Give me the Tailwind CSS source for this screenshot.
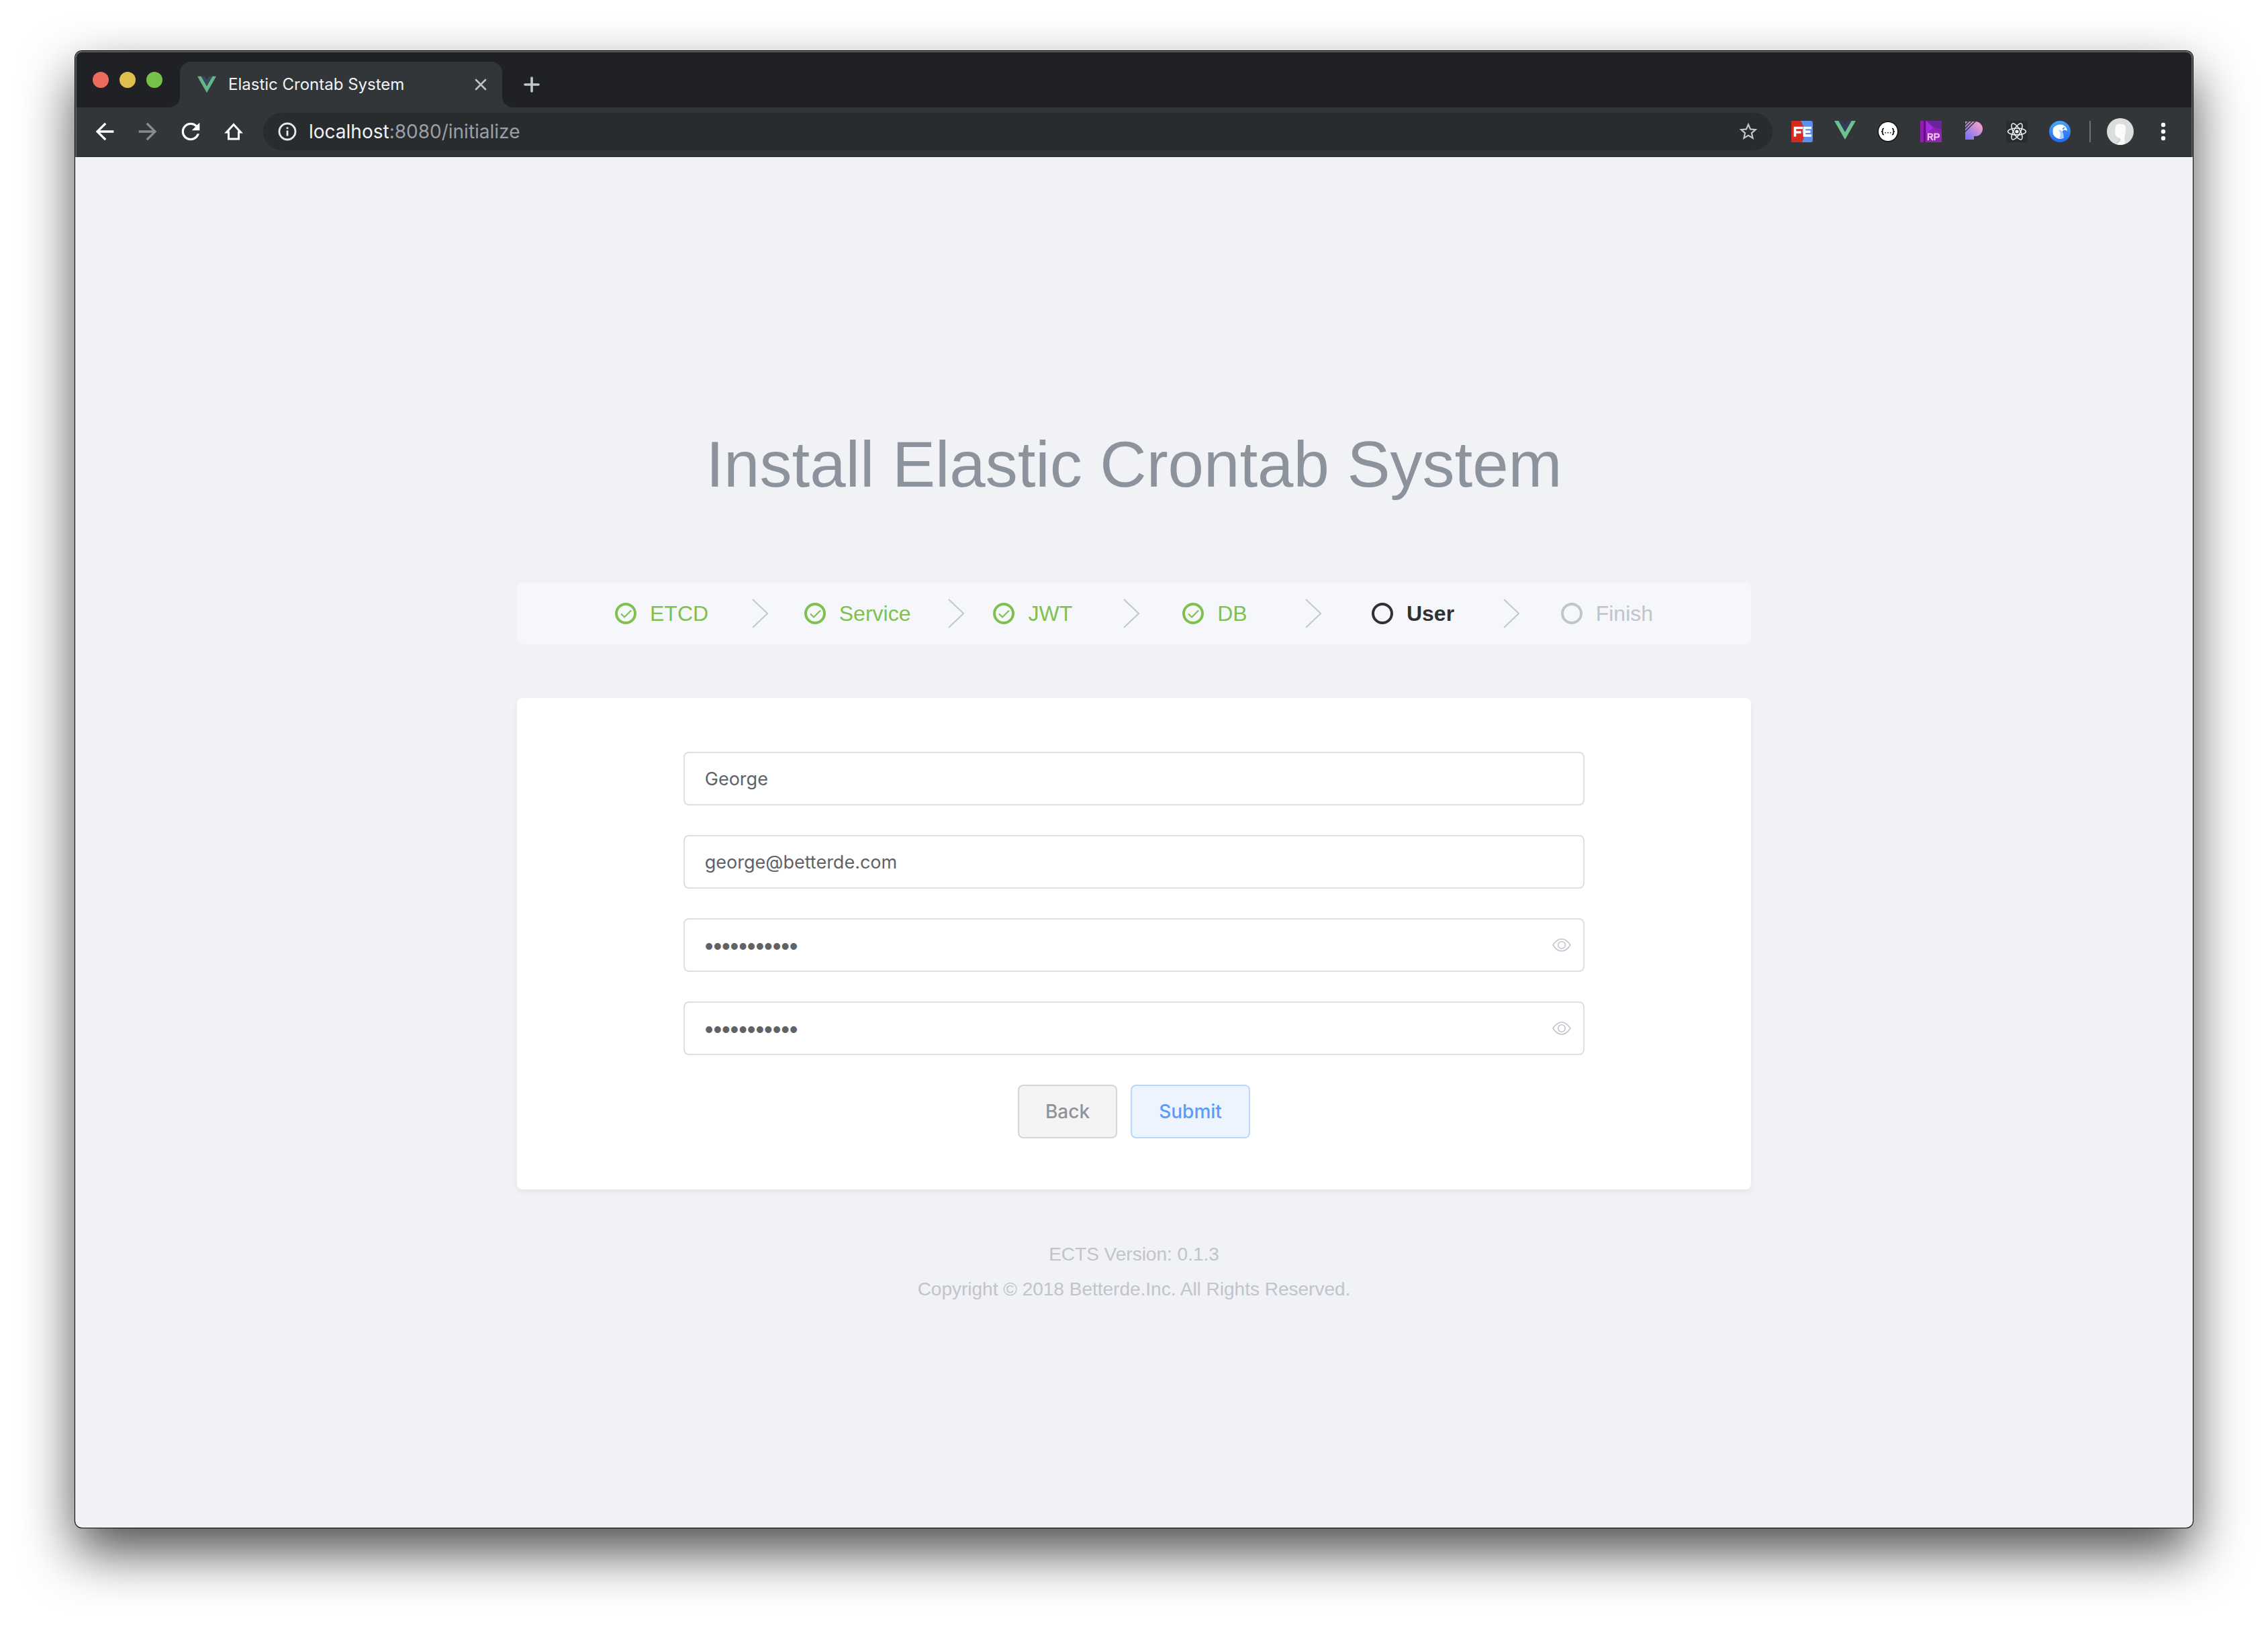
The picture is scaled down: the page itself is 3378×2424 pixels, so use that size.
<!DOCTYPE html>
<html lang="en">
<head>
<meta charset="utf-8">
<title>Elastic Crontab System</title>
<script src="https://cdn.jsdelivr.net/npm/@tailwindcss/browser@4"></script>
</head>
<body class="flex min-h-screen flex-col bg-white px-[112px] pt-[76px] pb-[148px] font-['Inter',sans-serif]">
<div class="flex flex-1 flex-col rounded-[10px] bg-[#f0f2f6] shadow-[0_0_0_1px_#000,0_36px_80px_rgba(0,0,0,0.7)]">

  <!-- Browser chrome -->
  <header class="rounded-t-[10px] border-x-2 border-t-2 border-[#5d6061] bg-[#202124]">
    <div class="flex h-[82px] items-center pl-6">
      <div class="flex gap-4">
        <button aria-label="Close window" class="size-6 rounded-full bg-[#ec6a5e]"></button>
        <button aria-label="Minimize window" class="size-6 rounded-full bg-[#e0c04c]"></button>
        <button aria-label="Zoom window" class="size-6 rounded-full bg-[#76c14a]"></button>
      </div>
      <div class="relative ml-[26px] flex h-[68px] w-[480px] items-center self-end rounded-t-2xl bg-[#323639] pr-4 pl-[26px]">
        <svg class="absolute bottom-0 -left-4 size-4" viewBox="0 0 16 16"><path d="M16 0A16 16 0 0 1 0 16H16Z" fill="#323639"/></svg>
        <svg class="absolute -right-4 bottom-0 size-4" viewBox="0 0 16 16"><path d="M0 0A16 16 0 0 0 16 16H0Z" fill="#323639"/></svg>
        <svg class="h-7 w-7" viewBox="0 0 32 28"><path d="M0 0H6.500L16 16.500L25.500 0H32L16 28Z" fill="#64b587"/><path d="M6.500 0H12.500L16 6L19.500 0H25.500L16 16.500Z" fill="#384960"/></svg>
        <span class="ml-[18px] flex-1 text-[24px] leading-8 text-[#f1f3f4]">Elastic Crontab System</span>
        <button aria-label="Close tab" class="flex size-8 items-center justify-center"><svg class="size-[18px]" viewBox="0 0 18 18"><path d="M2 2L16 16M16 2L2 16" stroke="#bdc1c6" stroke-width="2.600" stroke-linecap="round"/></svg></button>
      </div>
      <button aria-label="New tab" class="ml-6 flex h-[68px] w-10 items-center justify-center self-end"><svg class="size-6" viewBox="0 0 24 24"><path d="M12 2V22M2 12H22" stroke="#c3c7cb" stroke-width="3.600" stroke-linecap="round"/></svg></button>
    </div>

    <div class="flex h-[74px] items-center border-b border-[#2b2230] bg-[#323639] px-[10px] pb-px">
      <button aria-label="Back" class="flex w-16 justify-center"><svg class="size-10 fill-white" viewBox="0 0 24 24"><path d="M20 11H7.830l5.590-5.590L12 4l-8 8 8 8 1.410-1.410L7.830 13H20v-2z"/></svg></button>
      <button aria-label="Forward" class="flex w-16 justify-center"><svg class="size-10 fill-[#8a8c8e]" viewBox="0 0 24 24"><path d="M12 4l-1.410 1.410L16.170 11H4v2h12.170l-5.580 5.590L12 20l8-8z"/></svg></button>
      <button aria-label="Reload" class="flex w-16 justify-center"><svg class="size-10 fill-white" viewBox="0 0 24 24"><path d="M17.650 6.350C16.200 4.900 14.210 4 12 4c-4.420 0-7.990 3.580-7.990 8s3.570 8 7.990 8c3.730 0 6.840-2.550 7.730-6h-2.080c-.82 2.330-3.040 4-5.650 4-3.310 0-6-2.690-6-6s2.690-6 6-6c1.660 0 3.140.69 4.220 1.780L13 11h7V4l-2.350 2.350z"/></svg></button>
      <button aria-label="Home" class="flex w-16 justify-center"><svg class="size-[28px]" viewBox="0 0 28 28"><path d="M14 3.500L3.500 15H6.500V25H21.500V15H24.500Z" fill="none" stroke="#fff" stroke-width="3"/></svg></button>

      <div class="ml-3 flex h-14 min-w-0 flex-1 items-center rounded-full bg-[#282c2f] pr-5 pl-[22px]">
        <svg class="size-7" viewBox="0 0 28 28"><circle cx="14" cy="14" r="12" fill="none" stroke="#e8eaed" stroke-width="2.800"/><path d="M12.600 12.500H15.400V20.500H12.600ZM12.600 7.500H15.400V10.300H12.600Z" fill="#e8eaed"/></svg>
        <div role="textbox" aria-label="Address" contenteditable="true" class="ml-[18px] flex-1 text-[28px] leading-9 text-[#9aa0a6]"><span class="text-[#f1f3f4]">localhost</span>:8080/initialize</div>
        <button aria-label="Bookmark this page"><svg class="size-8" viewBox="0 0 24 24"><path d="M22 9.240l-7.190-.62L12 2 9.190 8.630 2 9.240l5.460 4.730L5.820 21 12 17.270 18.180 21l-1.630-7.030L22 9.240zM12 15.400l-3.760 2.270 1-4.280-3.320-2.880 4.380-.38L12 6.100l1.710 4.040 4.380.38-3.320 2.880 1 4.280L12 15.400z" fill="#c3c7cb"/></svg></button>
      </div>

      <div class="ml-3 flex">
        <button aria-label="FE helper" class="flex w-16 justify-center"><svg class="size-8" viewBox="0 0 32 32"><rect width="32" height="32" rx="3" fill="#5a8fee"/><path d="M3 0H14L18 8L16 16L19 24L16 32H3Q0 32 0 29V3Q0 0 3 0Z" fill="#d52b1e"/><path d="M5.500 23.500V10.500H17M5.500 17H14.500M30 10.500H19.500V22H30M19.500 16.300H28.500" fill="none" stroke="#fff" stroke-width="3.600"/></svg></button>
        <button aria-label="Vue devtools" class="flex w-16 justify-center"><svg class="h-7 w-8" viewBox="0 0 32 28"><path d="M0 0H6.500L16 16.500L25.500 0H32L16 28Z" fill="#6cc091"/><path d="M6.500 0H12.500L16 6L19.500 0H25.500L16 16.500Z" fill="#343a5c"/></svg></button>
        <button aria-label="JSON viewer" class="flex w-16 justify-center"><svg class="size-8" viewBox="0 0 32 32"><circle cx="16" cy="16" r="15.500" fill="#111"/><circle cx="16" cy="16" r="14" fill="#fff"/><path d="M10 11.500Q8 11.500 8 13V14.500Q8 16 6 16Q8 16 8 17.500V19Q8 20.500 10 20.500M22 11.500Q24 11.500 24 13V14.500Q24 16 26 16Q24 16 24 17.500V19Q24 20.500 22 20.500" fill="none" stroke="#111" stroke-width="1.600"/><path d="M11.500 17h1.600v1.600h-1.600zM15.200 17h1.600v1.600h-1.600zM18.900 17h1.600v1.600h-1.600z" fill="#111"/></svg></button>
        <button aria-label="Axure RP" class="flex w-16 justify-center"><svg class="size-8" viewBox="0 0 32 32"><rect width="32" height="32" fill="#8e20b0"/><path d="M9 0H32V12L20 10Z" fill="#6a2399"/><path d="M9 0L20 10L9 20Z" fill="#a32be0"/><path d="M9 20L20 10L32 20V32H9Z" fill="#9226b4"/><path d="M5 0H8V32H5Z" fill="#5c1580"/><path d="M12 29V19.500H15.500Q18 19.500 18 21.800Q18 24 15.500 24H12.500M15.500 24L18.500 29M21.500 29V19.500H25Q28 19.500 28 22Q28 24.500 25 24.500H21.500" fill="none" stroke="#f3c6f5" stroke-width="2.200"/></svg></button>
        <button aria-label="Pixel tool" class="flex w-16 justify-center"><svg class="size-7" viewBox="0 0 28 28"><defs><linearGradient id="pg" x1="1" y1="0" x2="0" y2="1"><stop offset="0.200" stop-color="#e79ccd"/><stop offset="1" stop-color="#6f6df8"/></linearGradient></defs><path d="M1 1H16A11 11 0 0 1 16 23H14V28H1Z" fill="url(#pg)"/><path d="M0 7L7 0M0 12L12 0M0 17L17 0" stroke="#323639" stroke-width="1.500"/></svg></button>
        <button aria-label="React devtools" class="flex w-16 justify-center"><svg class="size-8" viewBox="0 0 32 32"><rect width="32" height="32" rx="3" fill="#292c2f"/><g fill="none" stroke="#f1f3f4" stroke-width="1.500"><ellipse cx="16" cy="16" rx="13.500" ry="5"/><ellipse cx="16" cy="16" rx="13.500" ry="5" transform="rotate(60 16 16)"/><ellipse cx="16" cy="16" rx="13.500" ry="5" transform="rotate(120 16 16)"/></g><circle cx="16" cy="16" r="2.600" fill="#f1f3f4"/></svg></button>
        <button aria-label="Wave extension" class="flex w-16 justify-center"><svg class="size-8" viewBox="0 0 32 32"><defs><linearGradient id="wg" x1="0" y1="0" x2="0" y2="1"><stop offset="0" stop-color="#4aa6f5"/><stop offset="1" stop-color="#2468f6"/></linearGradient></defs><circle cx="16" cy="16" r="16" fill="url(#wg)"/><path d="M27 15Q26 6 17 5.500Q10 5.500 6 11Q4 20 9 24Q14 29 22 25.500Q16 22 20 15Q23 12 27 15Z" fill="#fff"/><path d="M14 13Q22 14 22 25.500Q19 27 15 26Q19 20 14 13Z" fill="#a9cdfb"/><path d="M20 11L24 9L21 14Z" fill="#3b86f6"/></svg></button>
      </div>
      <div class="mx-3 h-8 w-[2px] bg-[#6d7174]"></div>
      <button aria-label="Profile" class="flex w-16 justify-center"><svg class="size-10" viewBox="0 0 40 40"><circle cx="20" cy="20" r="20" fill="#dcdddd"/><path d="M13 12Q15 8 20 8.500Q27 8 28 14Q28.500 22 26 29L27 38Q21 41 15 39L19 35V30Q12 28 12 20Z" fill="#fafbfb"/><path d="M17 30Q21 31 19 34L14 37" fill="none" stroke="#c8caca" stroke-width="1.200"/></svg></button>
      <button aria-label="Menu" class="flex w-16 justify-center"><svg class="h-[28px] w-2" viewBox="0 0 8 28"><circle cx="4" cy="4" r="3.200" fill="#fff"/><circle cx="4" cy="14" r="3.200" fill="#fff"/><circle cx="4" cy="24" r="3.200" fill="#fff"/></svg></button>
    </div>
  </header>

  <!-- Installer page -->
  <main class="flex flex-1 flex-col items-center pt-[402px] font-['Liberation_Sans',sans-serif]">
    <h1 class="text-[96px] leading-[112px] text-[#8c939d]">Install Elastic Crontab System</h1>

    <div class="mt-[120px] w-full max-w-[1838px]">
      <ol class="flex h-[92px] items-center rounded-lg bg-[#f5f7fb] px-[146px] text-[32px] leading-10">
        <li class="flex flex-1 items-center text-[#7fc050]">
          <svg class="size-8" viewBox="0 0 32 32" fill="none" stroke="currentColor"><circle cx="16" cy="16" r="14" stroke-width="4"/><path d="M9 16.500L14 21.500L24 11.500" stroke-width="2.200"/></svg>
          <span class="ml-5">ETCD</span>
          <span class="flex flex-1 justify-center pl-3"><svg class="h-11 w-6" viewBox="0 0 24 44"><path d="M1 1L23 22L1 43" fill="none" stroke="#c3c6cd" stroke-width="2"/></svg></span>
        </li>
        <li class="flex flex-1 items-center text-[#7fc050]">
          <svg class="size-8" viewBox="0 0 32 32" fill="none" stroke="currentColor"><circle cx="16" cy="16" r="14" stroke-width="4"/><path d="M9 16.500L14 21.500L24 11.500" stroke-width="2.200"/></svg>
          <span class="ml-5">Service</span>
          <span class="flex flex-1 justify-center pl-3"><svg class="h-11 w-6" viewBox="0 0 24 44"><path d="M1 1L23 22L1 43" fill="none" stroke="#c3c6cd" stroke-width="2"/></svg></span>
        </li>
        <li class="flex flex-1 items-center text-[#7fc050]">
          <svg class="size-8" viewBox="0 0 32 32" fill="none" stroke="currentColor"><circle cx="16" cy="16" r="14" stroke-width="4"/><path d="M9 16.500L14 21.500L24 11.500" stroke-width="2.200"/></svg>
          <span class="ml-5">JWT</span>
          <span class="flex flex-1 justify-center pl-3"><svg class="h-11 w-6" viewBox="0 0 24 44"><path d="M1 1L23 22L1 43" fill="none" stroke="#c3c6cd" stroke-width="2"/></svg></span>
        </li>
        <li class="flex flex-1 items-center text-[#7fc050]">
          <svg class="size-8" viewBox="0 0 32 32" fill="none" stroke="currentColor"><circle cx="16" cy="16" r="14" stroke-width="4"/><path d="M9 16.500L14 21.500L24 11.500" stroke-width="2.200"/></svg>
          <span class="ml-5">DB</span>
          <span class="flex flex-1 justify-center pl-3"><svg class="h-11 w-6" viewBox="0 0 24 44"><path d="M1 1L23 22L1 43" fill="none" stroke="#c3c6cd" stroke-width="2"/></svg></span>
        </li>
        <li aria-current="step" class="flex flex-1 items-center font-bold text-[#303133]">
          <span class="size-8 rounded-full border-4 border-current"></span>
          <span class="ml-5">User</span>
          <span class="flex flex-1 justify-center pl-3"><svg class="h-11 w-6" viewBox="0 0 24 44"><path d="M1 1L23 22L1 43" fill="none" stroke="#c3c6cd" stroke-width="2"/></svg></span>
        </li>
        <li class="flex items-center text-[#c1c4cc]">
          <span class="size-8 rounded-full border-4 border-current"></span>
          <span class="ml-5">Finish</span>
        </li>
      </ol>

      <form class="mt-20 flex flex-col items-center rounded-lg bg-white px-20 pt-20 pb-[76px] font-['Inter',sans-serif] text-[27px] text-[#606266] shadow-[0_4px_8px_rgba(0,0,0,0.06)]">
        <div class="flex w-4/5 flex-col gap-11">
          <input aria-label="Name" type="text" value="George" class="h-20 w-full rounded-lg border-2 border-[#dcdfe6] bg-white px-[30px]">
          <input aria-label="Email" type="email" value="george@betterde.com" class="h-20 w-full rounded-lg border-2 border-[#dcdfe6] bg-white px-[30px]">
          <div class="relative">
            <input aria-label="Password" type="password" value="betterde123" class="h-20 w-full rounded-lg border-2 border-[#dcdfe6] bg-white px-[30px] pt-1 font-['Liberation_Sans',sans-serif] text-[36px]">
            <button type="button" aria-label="Show password" class="absolute inset-y-0 right-5 flex items-center"><svg class="h-5 w-7" viewBox="0 0 28 20" fill="none" stroke="#c0c4cc" stroke-width="1.600"><path d="M1 10Q7 1 14 1T27 10Q21 19 14 19T1 10Z"/><circle cx="14" cy="10" r="5.300"/></svg></button>
          </div>
          <div class="relative">
            <input aria-label="Confirm password" type="password" value="betterde123" class="h-20 w-full rounded-lg border-2 border-[#dcdfe6] bg-white px-[30px] pt-1 font-['Liberation_Sans',sans-serif] text-[36px]">
            <button type="button" aria-label="Show password confirmation" class="absolute inset-y-0 right-5 flex items-center"><svg class="h-5 w-7" viewBox="0 0 28 20" fill="none" stroke="#c0c4cc" stroke-width="1.600"><path d="M1 10Q7 1 14 1T27 10Q21 19 14 19T1 10Z"/><circle cx="14" cy="10" r="5.300"/></svg></button>
          </div>
        </div>
        <div class="mt-11 flex gap-5 text-[28px] font-medium">
          <button type="button" class="h-20 w-[148px] rounded-lg border-2 border-[#d3d4d6] bg-[#f4f4f5] text-[#909399]">Back</button>
          <button type="submit" class="h-20 w-[178px] rounded-lg border-2 border-[#b9d7fc] bg-[#edf4fe] text-[#5a9cf8]">Submit</button>
        </div>
      </form>
    </div>

    <footer class="mt-[71px] text-center text-[28px] leading-[52px] text-[#c1c4cc]">
      <p>ECTS Version: 0.1.3</p>
      <p>Copyright © 2018 Betterde.Inc. All Rights Reserved.</p>
    </footer>
  </main>
</div>
</body>
</html>
